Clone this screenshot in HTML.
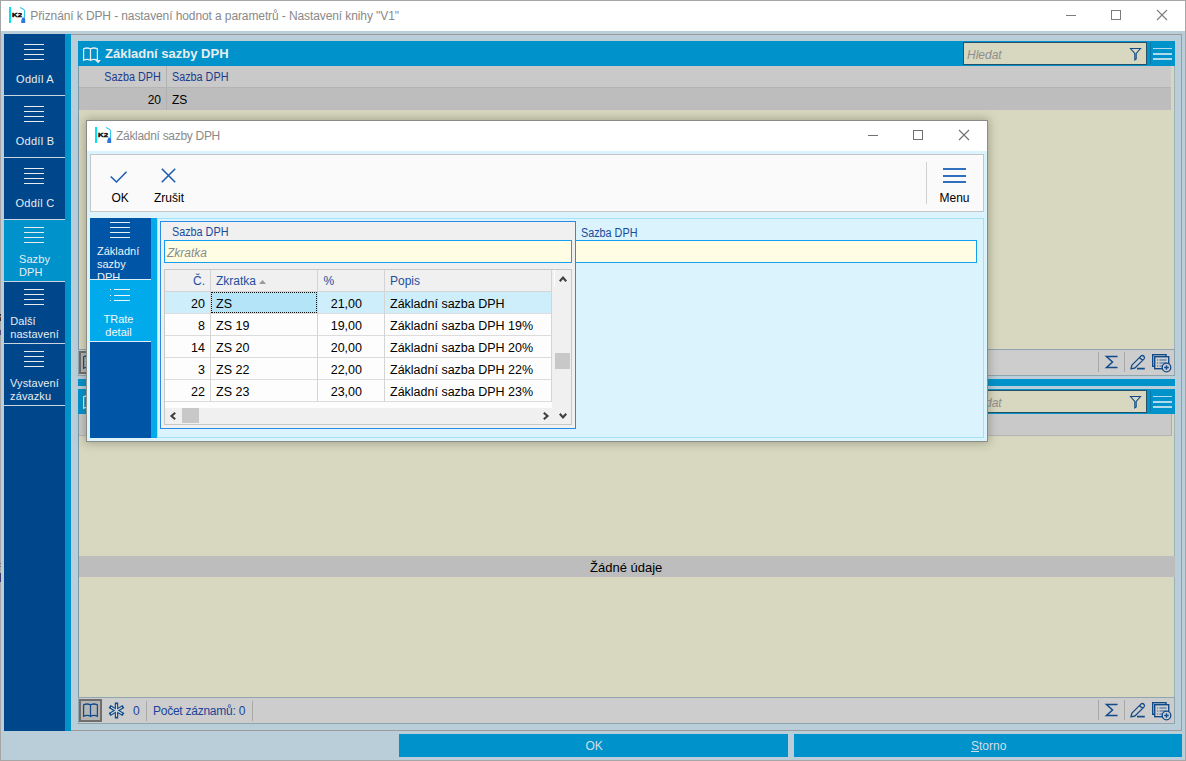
<!DOCTYPE html>
<html><head><meta charset="utf-8">
<style>
*{margin:0;padding:0;box-sizing:border-box}
html,body{width:1186px;height:761px;overflow:hidden}
body{position:relative;background:#b9ced9;font-family:"Liberation Sans",sans-serif;font-size:12px;color:#000}
.a{position:absolute}
.t{position:absolute;white-space:nowrap}
svg{overflow:visible}
</style></head><body>
<div class="a" style="left:0px;top:0px;width:1186px;height:761px;border:1px solid #a6a6a6"></div>
<div class="a" style="left:1px;top:1px;width:1184px;height:30px;background:#fff"></div>
<svg class="a" style="left:9px;top:7px" width="17" height="17" viewBox="0 0 17 17"><rect x="0" y="0" width="2" height="16" fill="#00e4f2"/><text x="3" y="10.2" font-family="Liberation Sans" font-weight="bold" font-size="6.2" textLength="10" lengthAdjust="spacingAndGlyphs" fill="#000" stroke="#000" stroke-width="0.35">K2</text><path d="M11 0.5 L14.5 2.2 Q15.6 3 15.6 4.5 L15.4 11" stroke="#38c6e6" stroke-width="1.1" fill="none"/><path d="M13.5 10.5 Q16.2 10 16.2 12.5 L16.2 16 L12.2 16 Q12 12.5 13.5 10.5Z" fill="#2a78dc"/></svg>
<div class="t" style="left:30.3px;top:8.84px;font-size:12px;line-height:14px;color:#898989;letter-spacing:-0.1px">Přiznání k DPH - nastavení hodnot a parametrů - Nastavení knihy "V1"</div>
<div class="a" style="left:1066px;top:15px;width:10px;height:1px;background:#7c7c7c"></div>
<div class="a" style="left:1111px;top:10px;width:10px;height:10px;border:1px solid #7c7c7c"></div>
<svg class="a" style="left:1157px;top:10px" width="10" height="10" viewBox="0 0 10 10"><path d="M0 0L10 10M10 0L0 10" stroke="#7c7c7c" stroke-width="1.1"/></svg>
<div class="a" style="left:0px;top:314px;width:1px;height:2px;background:#333"></div>
<div class="a" style="left:0px;top:317px;width:1px;height:2px;background:#6a3030"></div>
<div class="a" style="left:0px;top:319px;width:1px;height:2px;background:#333"></div>
<div class="a" style="left:0px;top:330px;width:1px;height:5px;background:#5a4a80"></div>
<div class="a" style="left:0px;top:573px;width:1px;height:9px;background:#3a3a72"></div>
<div class="a" style="left:0px;top:563px;width:1px;height:1px;background:#777"></div>
<div class="a" style="left:0px;top:566px;width:1px;height:1px;background:#777"></div>
<div class="a" style="left:71px;top:34px;width:1111px;height:697px;border:1px solid #9b9b9b;border-left:none"></div>
<div class="a" style="left:4px;top:34px;width:61px;height:697px;background:#00468a"></div>
<div class="a" style="left:65px;top:34px;width:6px;height:697px;background:#0092cb"></div>
<div class="a" style="left:4px;top:95px;width:61px;height:1px;background:#c9d5df"></div>
<div class="a" style="left:24px;top:44px;width:20px;height:1px;background:#e6ecef"></div>
<div class="a" style="left:24px;top:49px;width:20px;height:1px;background:#e6ecef"></div>
<div class="a" style="left:24px;top:54px;width:20px;height:1px;background:#e6ecef"></div>
<div class="a" style="left:24px;top:59px;width:20px;height:1px;background:#e6ecef"></div>
<div class="t" style="left:-165px;width:400px;top:72.99px;font-size:11px;line-height:13px;color:#e8eef2;text-align:center;letter-spacing:0.25px">Oddíl A</div>
<div class="a" style="left:4px;top:157px;width:61px;height:1px;background:#c9d5df"></div>
<div class="a" style="left:24px;top:106px;width:20px;height:1px;background:#e6ecef"></div>
<div class="a" style="left:24px;top:111px;width:20px;height:1px;background:#e6ecef"></div>
<div class="a" style="left:24px;top:116px;width:20px;height:1px;background:#e6ecef"></div>
<div class="a" style="left:24px;top:121px;width:20px;height:1px;background:#e6ecef"></div>
<div class="t" style="left:-165px;width:400px;top:134.99px;font-size:11px;line-height:13px;color:#e8eef2;text-align:center;letter-spacing:0.25px">Oddíl B</div>
<div class="a" style="left:4px;top:219px;width:61px;height:1px;background:#c9d5df"></div>
<div class="a" style="left:24px;top:168px;width:20px;height:1px;background:#e6ecef"></div>
<div class="a" style="left:24px;top:173px;width:20px;height:1px;background:#e6ecef"></div>
<div class="a" style="left:24px;top:178px;width:20px;height:1px;background:#e6ecef"></div>
<div class="a" style="left:24px;top:183px;width:20px;height:1px;background:#e6ecef"></div>
<div class="t" style="left:-165px;width:400px;top:196.99px;font-size:11px;line-height:13px;color:#e8eef2;text-align:center;letter-spacing:0.25px">Oddíl C</div>
<div class="a" style="left:4px;top:220px;width:67px;height:61px;background:#0092cb"></div>
<div class="a" style="left:4px;top:281px;width:61px;height:1px;background:#c9d5df"></div>
<div class="a" style="left:24px;top:227px;width:20px;height:1px;background:#e6ecef"></div>
<div class="a" style="left:24px;top:232px;width:20px;height:1px;background:#e6ecef"></div>
<div class="a" style="left:24px;top:237px;width:20px;height:1px;background:#e6ecef"></div>
<div class="a" style="left:24px;top:242px;width:20px;height:1px;background:#e6ecef"></div>
<div class="t" style="left:4px;width:61px;top:253.1px;font-size:11px;line-height:13px;color:#e8eef2;display:flex;justify-content:center;letter-spacing:0.1px"><div style="text-align:left">Sazby<br>DPH</div></div>
<div class="a" style="left:4px;top:343px;width:61px;height:1px;background:#c9d5df"></div>
<div class="a" style="left:24px;top:289px;width:20px;height:1px;background:#e6ecef"></div>
<div class="a" style="left:24px;top:294px;width:20px;height:1px;background:#e6ecef"></div>
<div class="a" style="left:24px;top:299px;width:20px;height:1px;background:#e6ecef"></div>
<div class="a" style="left:24px;top:304px;width:20px;height:1px;background:#e6ecef"></div>
<div class="t" style="left:4px;width:61px;top:315.1px;font-size:11px;line-height:13px;color:#e8eef2;display:flex;justify-content:center;letter-spacing:0.1px"><div style="text-align:left">Další<br>nastavení</div></div>
<div class="a" style="left:4px;top:405px;width:61px;height:1px;background:#c9d5df"></div>
<div class="a" style="left:24px;top:351px;width:20px;height:1px;background:#e6ecef"></div>
<div class="a" style="left:24px;top:356px;width:20px;height:1px;background:#e6ecef"></div>
<div class="a" style="left:24px;top:361px;width:20px;height:1px;background:#e6ecef"></div>
<div class="a" style="left:24px;top:366px;width:20px;height:1px;background:#e6ecef"></div>
<div class="t" style="left:4px;width:61px;top:377.1px;font-size:11px;line-height:13px;color:#e8eef2;display:flex;justify-content:center;letter-spacing:0.1px"><div style="text-align:left">Vystavení<br>závazku</div></div>
<div class="a" style="left:78px;top:41px;width:1097px;height:25px;background:#0092cb"></div>
<svg class="a" style="left:83px;top:47px" width="16" height="15" viewBox="0 0 16 15"><path d="M0.6 1.8 Q4 0.2 7.5 1.8 L7.5 13.2 Q4 11.6 0.6 13.2 Z M7.5 1.8 Q11 0.2 14.4 1.8 L14.4 13.2 Q11 11.6 7.5 13.2 Z" stroke="#e8ecee" stroke-width="1.25" fill="none"/></svg>
<svg class="a" style="left:94.5px;top:60px" width="6" height="4" viewBox="0 0 6 4"><path d="M0 0L6 0L3 3.2Z" fill="#e8ecee"/></svg>
<div class="t" style="left:105px;top:46.00px;font-size:13px;line-height:16px;color:#e9eef0;font-weight:bold">Základní sazby DPH</div>
<div class="a" style="left:963px;top:42px;width:184px;height:23px;background:#d8d8c0;border:1px solid #2a5068"></div>
<div class="t" style="left:967px;top:47.84px;font-size:12px;line-height:14px;color:#8e8e8e;font-style:italic">Hledat</div>
<svg class="a" style="left:1130px;top:48px" width="11" height="12" viewBox="0 0 11 12"><path d="M0.5 0.5 L10.5 0.5 L6.2 5.5 L6.2 11 L4.8 12 L4.8 5.5 Z" stroke="#124b8a" stroke-width="1.1" fill="none"/></svg>
<div class="a" style="left:1150px;top:43px;width:1px;height:21px;background:#0a78a8"></div>
<div class="a" style="left:1153px;top:47.8px;width:19px;height:1.6px;background:rgba(228,238,242,0.78)"></div>
<div class="a" style="left:1153px;top:53.0px;width:19px;height:1.6px;background:rgba(228,238,242,0.78)"></div>
<div class="a" style="left:1153px;top:58.199999999999996px;width:19px;height:1.6px;background:rgba(228,238,242,0.78)"></div>
<div class="a" style="left:78px;top:66px;width:1097px;height:283px;background:#d8d8c0;border-left:1px solid #7b98a6;border-right:1px solid #9fb2ba"></div>
<div class="a" style="left:79px;top:66px;width:1092px;height:21px;background:#c9c9c9"></div>
<div class="a" style="left:79px;top:87px;width:1092px;height:23px;background:#bdbdbd"></div>
<div class="a" style="left:79px;top:87px;width:1092px;height:1px;background:#b4b4b4"></div>
<div class="a" style="left:166px;top:66px;width:1px;height:44px;background:#b0b0b0"></div>
<div class="t" style="right:1025px;top:69.64px;font-size:12px;line-height:14px;color:#1b3c8c;text-align:right;transform:scaleX(0.9);transform-origin:right">Sazba DPH</div>
<div class="t" style="left:172px;top:69.64px;font-size:12px;line-height:14px;color:#1b3c8c;transform:scaleX(0.9);transform-origin:left">Sazba DPH</div>
<div class="t" style="right:1025px;top:92.84px;font-size:12px;line-height:14px;color:#000;text-align:right;">20</div>
<div class="t" style="left:172px;top:92.84px;font-size:12px;line-height:14px;color:#000;">ZS</div>
<div class="a" style="left:78px;top:349px;width:1097px;height:27px;background:#cdcdcd;border:1px solid #8ea4ae"></div>
<div class="a" style="left:79px;top:351px;width:23px;height:23px;background:#b5b5b5;border:2px solid #6e6e6e"></div>
<svg class="a" style="left:83px;top:355px" width="16" height="15" viewBox="0 0 16 15"><path d="M0.6 1.8 Q4 0.2 7.5 1.8 L7.5 13.2 Q4 11.6 0.6 13.2 Z M7.5 1.8 Q11 0.2 14.4 1.8 L14.4 13.2 Q11 11.6 7.5 13.2 Z" stroke="#124b8a" stroke-width="1.25" fill="none"/></svg>
<div class="a" style="left:1098px;top:352px;width:1px;height:20px;background:#a8a8a8"></div>
<div class="a" style="left:1124px;top:352px;width:1px;height:20px;background:#a8a8a8"></div>
<svg class="a" style="left:1105px;top:355px" width="14" height="14" viewBox="0 0 14 14"><path d="M12.5 1.5 L1.5 1.5 L7.5 7 L1.5 12.5 L12.5 12.5" stroke="#124b8a" stroke-width="1.5" fill="none" stroke-linejoin="miter"/></svg>
<svg class="a" style="left:1130px;top:355px" width="16" height="16" viewBox="0 0 16 16"><path d="M0.9 13.8 L1.9 10.1 L10.9 1.1 Q12.5 -0.2 13.9 1.2 Q15.2 2.6 13.9 4.1 L4.9 13 Z M9.6 2.5 L12.6 5.5" stroke="#124b8a" stroke-width="1.3" fill="none" stroke-linejoin="round"/><path d="M7 13.6 L14.8 13.6" stroke="#124b8a" stroke-width="1.7"/></svg>
<svg class="a" style="left:1152px;top:354px" width="21" height="19" viewBox="0 0 21 19"><rect x="0.7" y="0.7" width="13.3" height="11.6" fill="none" stroke="#124b8a" stroke-width="1.4"/><rect x="2.7" y="2.7" width="14" height="12" fill="#cdcdcd" stroke="#124b8a" stroke-width="1.4"/><path d="M5 6h1.2M7.5 6h7M5 9h1.2M7.5 9h7M5 12h1.2M7.5 12h4" stroke="#3a6aa8" stroke-width="1.1"/><circle cx="14.5" cy="13.5" r="4.3" fill="#cdcdcd" stroke="#124b8a" stroke-width="1.3"/><path d="M12.2 13.5h4.6M14.5 11.2v4.6" stroke="#124b8a" stroke-width="1.4"/></svg>
<div class="a" style="left:78px;top:379px;width:1097px;height:7px;background:#0092cb"></div>
<div class="a" style="left:78px;top:389px;width:1097px;height:25px;background:#0092cb"></div>
<svg class="a" style="left:83px;top:395px" width="16" height="15" viewBox="0 0 16 15"><path d="M0.6 1.8 Q4 0.2 7.5 1.8 L7.5 13.2 Q4 11.6 0.6 13.2 Z M7.5 1.8 Q11 0.2 14.4 1.8 L14.4 13.2 Q11 11.6 7.5 13.2 Z" stroke="#e8ecee" stroke-width="1.25" fill="none"/></svg>
<svg class="a" style="left:94.5px;top:408px" width="6" height="4" viewBox="0 0 6 4"><path d="M0 0L6 0L3 3.2Z" fill="#e8ecee"/></svg>
<div class="a" style="left:963px;top:390px;width:184px;height:23px;background:#d8d8c0;border:1px solid #2a5068"></div>
<div class="t" style="left:967px;top:395.84px;font-size:12px;line-height:14px;color:#8e8e8e;font-style:italic">Hledat</div>
<svg class="a" style="left:1130px;top:396px" width="11" height="12" viewBox="0 0 11 12"><path d="M0.5 0.5 L10.5 0.5 L6.2 5.5 L6.2 11 L4.8 12 L4.8 5.5 Z" stroke="#124b8a" stroke-width="1.1" fill="none"/></svg>
<div class="a" style="left:1150px;top:391px;width:1px;height:21px;background:#0a78a8"></div>
<div class="a" style="left:1153px;top:395.8px;width:19px;height:1.6px;background:rgba(228,238,242,0.78)"></div>
<div class="a" style="left:1153px;top:401.0px;width:19px;height:1.6px;background:rgba(228,238,242,0.78)"></div>
<div class="a" style="left:1153px;top:406.2px;width:19px;height:1.6px;background:rgba(228,238,242,0.78)"></div>
<div class="a" style="left:78px;top:414px;width:1097px;height:283px;background:#d8d8c0;border-left:1px solid #7b98a6;border-right:1px solid #9fb2ba"></div>
<div class="a" style="left:79px;top:414px;width:1093px;height:22px;background:#c9c9c9;border-right:1px solid #acacac;border-bottom:1px solid #b4b4b4"></div>
<div class="a" style="left:79px;top:556px;width:1096px;height:21px;background:#bdbdbd"></div>
<div class="t" style="left:590px;top:559.50px;font-size:13px;line-height:16px;color:#000;">Žádné údaje</div>
<div class="a" style="left:78px;top:697px;width:1097px;height:27px;background:#cdcdcd;border:1px solid #8ea4ae"></div>
<div class="a" style="left:79px;top:699px;width:23px;height:23px;background:#b5b5b5;border:2px solid #6e6e6e"></div>
<svg class="a" style="left:83px;top:703px" width="16" height="15" viewBox="0 0 16 15"><path d="M0.6 1.8 Q4 0.2 7.5 1.8 L7.5 13.2 Q4 11.6 0.6 13.2 Z M7.5 1.8 Q11 0.2 14.4 1.8 L14.4 13.2 Q11 11.6 7.5 13.2 Z" stroke="#124b8a" stroke-width="1.25" fill="none"/></svg>
<div class="a" style="left:1098px;top:700px;width:1px;height:20px;background:#a8a8a8"></div>
<div class="a" style="left:1124px;top:700px;width:1px;height:20px;background:#a8a8a8"></div>
<svg class="a" style="left:1105px;top:703px" width="14" height="14" viewBox="0 0 14 14"><path d="M12.5 1.5 L1.5 1.5 L7.5 7 L1.5 12.5 L12.5 12.5" stroke="#124b8a" stroke-width="1.5" fill="none" stroke-linejoin="miter"/></svg>
<svg class="a" style="left:1130px;top:703px" width="16" height="16" viewBox="0 0 16 16"><path d="M0.9 13.8 L1.9 10.1 L10.9 1.1 Q12.5 -0.2 13.9 1.2 Q15.2 2.6 13.9 4.1 L4.9 13 Z M9.6 2.5 L12.6 5.5" stroke="#124b8a" stroke-width="1.3" fill="none" stroke-linejoin="round"/><path d="M7 13.6 L14.8 13.6" stroke="#124b8a" stroke-width="1.7"/></svg>
<svg class="a" style="left:1152px;top:702px" width="21" height="19" viewBox="0 0 21 19"><rect x="0.7" y="0.7" width="13.3" height="11.6" fill="none" stroke="#124b8a" stroke-width="1.4"/><rect x="2.7" y="2.7" width="14" height="12" fill="#cdcdcd" stroke="#124b8a" stroke-width="1.4"/><path d="M5 6h1.2M7.5 6h7M5 9h1.2M7.5 9h7M5 12h1.2M7.5 12h4" stroke="#3a6aa8" stroke-width="1.1"/><circle cx="14.5" cy="13.5" r="4.3" fill="#cdcdcd" stroke="#124b8a" stroke-width="1.3"/><path d="M12.2 13.5h4.6M14.5 11.2v4.6" stroke="#124b8a" stroke-width="1.4"/></svg>
<svg class="a" style="left:109px;top:703px" width="16" height="15" viewBox="0 0 16 15"><g fill="none" stroke-linecap="square"><path d="M7.5 1.2V13.8M2 4.3L13 10.7M2 10.7L13 4.3" stroke="#124b8a" stroke-width="3.4"/><path d="M7.5 1.2V13.8M2 4.3L13 10.7M2 10.7L13 4.3" stroke="#d6dde2" stroke-width="1.1" stroke-linecap="butt"/></g></svg>
<div class="t" style="left:133px;top:703.84px;font-size:12px;line-height:14px;color:#1a449a;">0</div>
<div class="a" style="left:146px;top:701px;width:1px;height:20px;background:#a8a8a8"></div>
<div class="t" style="left:153px;top:703.84px;font-size:12px;line-height:14px;color:#1a449a;letter-spacing:-0.25px">Počet záznamů: 0</div>
<div class="a" style="left:252px;top:701px;width:1px;height:20px;background:#a8a8a8"></div>
<div class="a" style="left:399px;top:734px;width:389px;height:23px;background:#0092cb"></div>
<div class="t" style="left:585.5px;top:738.64px;font-size:12px;line-height:14px;color:#d2dfe8;">OK</div>
<div class="a" style="left:794px;top:734px;width:388px;height:23px;background:#0092cb"></div>
<div class="t" style="left:971px;top:738.64px;font-size:12px;line-height:14px;color:#d2dfe8;"><u>S</u>torno</div>
<div class="a" style="left:86px;top:120px;width:902px;height:322px;background:#dbf3fd;border:1px solid #8b8b85;box-shadow:0 0 9px 1px rgba(60,60,40,0.35)"></div>
<div class="a" style="left:87px;top:121px;width:900px;height:30px;background:#fff"></div>
<svg class="a" style="left:95px;top:127px" width="17" height="17" viewBox="0 0 17 17"><rect x="0" y="0" width="2" height="16" fill="#00e4f2"/><text x="3" y="10.2" font-family="Liberation Sans" font-weight="bold" font-size="6.2" textLength="10" lengthAdjust="spacingAndGlyphs" fill="#000" stroke="#000" stroke-width="0.35">K2</text><path d="M11 0.5 L14.5 2.2 Q15.6 3 15.6 4.5 L15.4 11" stroke="#38c6e6" stroke-width="1.1" fill="none"/><path d="M13.5 10.5 Q16.2 10 16.2 12.5 L16.2 16 L12.2 16 Q12 12.5 13.5 10.5Z" fill="#2a78dc"/></svg>
<div class="t" style="left:116px;top:128.84px;font-size:12px;line-height:14px;color:#8a8a8a;letter-spacing:-0.3px">Základní sazby DPH</div>
<div class="a" style="left:868px;top:135px;width:10px;height:1px;background:#707070"></div>
<div class="a" style="left:913px;top:130px;width:10px;height:10px;border:1px solid #707070"></div>
<svg class="a" style="left:959px;top:130px" width="10" height="10" viewBox="0 0 10 10"><path d="M0 0L10 10M10 0L0 10" stroke="#707070" stroke-width="1.1"/></svg>
<div class="a" style="left:90px;top:154px;width:894px;height:58px;background:#fafafa;border:1px solid #c6c6c6"></div>
<svg class="a" style="left:110px;top:171px" width="17" height="12" viewBox="0 0 17 12"><path d="M0.7 5.5 L6.5 11 L16.5 0.8" stroke="#1d5db0" stroke-width="1.6" fill="none"/></svg>
<svg class="a" style="left:161px;top:168px" width="15" height="15" viewBox="0 0 15 15"><path d="M0.8 0.8L14.2 14.2M14.2 0.8L0.8 14.2" stroke="#1d5db0" stroke-width="1.6" fill="none"/></svg>
<div class="t" style="left:111.5px;top:190.84px;font-size:12px;line-height:14px;color:#000;">OK</div>
<div class="t" style="left:154px;top:190.84px;font-size:12px;line-height:14px;color:#000;">Zrušit</div>
<div class="a" style="left:926px;top:162px;width:1px;height:42px;background:#d0d0d0"></div>
<div class="a" style="left:943px;top:168.0px;width:23px;height:2px;background:#2f6fbe"></div>
<div class="a" style="left:943px;top:174.6px;width:23px;height:2px;background:#2f6fbe"></div>
<div class="a" style="left:943px;top:181.2px;width:23px;height:2px;background:#2f6fbe"></div>
<div class="t" style="left:939.5px;top:190.54px;font-size:12px;line-height:14px;color:#000;">Menu</div>
<div class="a" style="left:157px;top:218px;width:827px;height:220px;border:1px solid #a3e1f9"></div>
<div class="a" style="left:90px;top:218px;width:61px;height:220px;background:#0055a6"></div>
<div class="a" style="left:151px;top:218px;width:6px;height:220px;background:#00aaeb"></div>
<div class="a" style="left:90px;top:279px;width:61px;height:1px;background:#d8eef8"></div>
<div class="a" style="left:110px;top:222px;width:20px;height:1px;background:#e8f0f4"></div>
<div class="a" style="left:110px;top:227px;width:20px;height:1px;background:#e8f0f4"></div>
<div class="a" style="left:110px;top:232px;width:20px;height:1px;background:#e8f0f4"></div>
<div class="a" style="left:110px;top:237px;width:20px;height:1px;background:#e8f0f4"></div>
<div class="a" style="left:90px;top:218px;width:61px;height:61px;overflow:hidden"><div class="t" style="left:7px;top:26.6px;font-size:11px;line-height:13px;color:#eef3f6">Základní<br>sazby<br>DPH</div></div>
<div class="a" style="left:90px;top:280px;width:67px;height:61px;background:#00aaeb"></div>
<div class="a" style="left:90px;top:341px;width:61px;height:1px;background:#d8eef8"></div>
<div class="a" style="left:110px;top:289.0px;width:1px;height:1px;background:#eef6fa"></div>
<div class="a" style="left:114px;top:289.0px;width:16px;height:1px;background:#eef6fa"></div>
<div class="a" style="left:110px;top:294.5px;width:1px;height:1px;background:#eef6fa"></div>
<div class="a" style="left:114px;top:294.5px;width:16px;height:1px;background:#eef6fa"></div>
<div class="a" style="left:110px;top:300.0px;width:1px;height:1px;background:#eef6fa"></div>
<div class="a" style="left:114px;top:300.0px;width:16px;height:1px;background:#eef6fa"></div>
<div class="t" style="left:88px;width:61px;top:313.1px;font-size:11px;line-height:13px;color:#f4f8fa;text-align:center">TRate<br>detail</div>
<div class="a" style="left:160px;top:221px;width:416px;height:208px;background:#f0f0f0;border:1px solid #2a8be6"></div>
<div class="t" style="left:171.5px;top:225.14px;font-size:12px;line-height:14px;color:#174a9c;transform:scaleX(0.9);transform-origin:left">Sazba DPH</div>
<div class="a" style="left:164px;top:240px;width:408px;height:23px;background:#fffde4;border:1px solid #14a0f2"></div>
<div class="t" style="left:167px;top:245.54px;font-size:12px;line-height:14px;color:#8a8a8a;font-style:italic">Zkratka</div>
<div class="t" style="left:581px;top:225.84px;font-size:12px;line-height:14px;color:#174a9c;transform:scaleX(0.9);transform-origin:left">Sazba DPH</div>
<div class="a" style="left:576px;top:240px;width:401px;height:23px;background:#fffde4;border:1px solid #14a0f2;border-left:none"></div>
<div class="a" style="left:164px;top:269px;width:408px;height:156px;background:#fdfdfd;border:1px solid #c8c8c8"></div>
<div class="a" style="left:165px;top:270px;width:387px;height:21px;background:#f0f0f0"></div>
<div class="a" style="left:165px;top:291px;width:387px;height:1px;background:#d4d4d4"></div>
<div class="a" style="left:165px;top:292px;width:387px;height:21px;background:#cdeefa"></div>
<div class="a" style="left:165px;top:313px;width:387px;height:1px;background:#dcdcdc"></div>
<div class="a" style="left:165px;top:335px;width:387px;height:1px;background:#dcdcdc"></div>
<div class="a" style="left:165px;top:357px;width:387px;height:1px;background:#dcdcdc"></div>
<div class="a" style="left:165px;top:379px;width:387px;height:1px;background:#dcdcdc"></div>
<div class="a" style="left:165px;top:401px;width:387px;height:1px;background:#dcdcdc"></div>
<div class="a" style="left:210px;top:270px;width:1px;height:132px;background:#d4d4d4"></div>
<div class="a" style="left:317px;top:270px;width:1px;height:132px;background:#d4d4d4"></div>
<div class="a" style="left:384px;top:270px;width:1px;height:132px;background:#d4d4d4"></div>
<div class="a" style="left:551px;top:270px;width:1px;height:132px;background:#d4d4d4"></div>
<div class="a" style="left:211px;top:292px;width:106px;height:21px;background:#b3e4f8;outline:1px dotted #000;outline-offset:-1px"></div>
<div class="a" style="left:211px;top:292px;width:106px;height:21px;border:1px dotted #111"></div>
<div class="t" style="right:981px;top:273.64px;font-size:12px;line-height:14px;color:#1d4f9f;text-align:right;">Č.</div>
<div class="t" style="left:216px;top:273.64px;font-size:12px;line-height:14px;color:#1d4f9f;">Zkratka</div>
<svg class="a" style="left:259px;top:280px" width="7" height="4" viewBox="0 0 7 4"><path d="M0 4L3.5 0L7 4Z" fill="#9a9a9a"/></svg>
<div class="t" style="left:323.5px;top:273.64px;font-size:12px;line-height:14px;color:#1d4f9f;">%</div>
<div class="t" style="left:390px;top:273.64px;font-size:12px;line-height:14px;color:#1d4f9f;">Popis</div>
<div class="t" style="right:981px;top:296.57px;font-size:12.5px;line-height:15px;color:#000;text-align:right;">20</div>
<div class="t" style="left:216px;top:296.57px;font-size:12.5px;line-height:15px;color:#000;">ZS</div>
<div class="t" style="right:824px;top:296.57px;font-size:12.5px;line-height:15px;color:#000;text-align:right;">21,00</div>
<div class="t" style="left:390px;top:296.57px;font-size:12.5px;line-height:15px;color:#000;">Základní sazba DPH</div>
<div class="t" style="right:981px;top:318.57px;font-size:12.5px;line-height:15px;color:#000;text-align:right;">8</div>
<div class="t" style="left:216px;top:318.57px;font-size:12.5px;line-height:15px;color:#000;">ZS 19</div>
<div class="t" style="right:824px;top:318.57px;font-size:12.5px;line-height:15px;color:#000;text-align:right;">19,00</div>
<div class="t" style="left:390px;top:318.57px;font-size:12.5px;line-height:15px;color:#000;">Základní sazba DPH 19%</div>
<div class="t" style="right:981px;top:340.57px;font-size:12.5px;line-height:15px;color:#000;text-align:right;">14</div>
<div class="t" style="left:216px;top:340.57px;font-size:12.5px;line-height:15px;color:#000;">ZS 20</div>
<div class="t" style="right:824px;top:340.57px;font-size:12.5px;line-height:15px;color:#000;text-align:right;">20,00</div>
<div class="t" style="left:390px;top:340.57px;font-size:12.5px;line-height:15px;color:#000;">Základní sazba DPH 20%</div>
<div class="t" style="right:981px;top:362.57px;font-size:12.5px;line-height:15px;color:#000;text-align:right;">3</div>
<div class="t" style="left:216px;top:362.57px;font-size:12.5px;line-height:15px;color:#000;">ZS 22</div>
<div class="t" style="right:824px;top:362.57px;font-size:12.5px;line-height:15px;color:#000;text-align:right;">22,00</div>
<div class="t" style="left:390px;top:362.57px;font-size:12.5px;line-height:15px;color:#000;">Základní sazba DPH 22%</div>
<div class="t" style="right:981px;top:384.57px;font-size:12.5px;line-height:15px;color:#000;text-align:right;">22</div>
<div class="t" style="left:216px;top:384.57px;font-size:12.5px;line-height:15px;color:#000;">ZS 23</div>
<div class="t" style="right:824px;top:384.57px;font-size:12.5px;line-height:15px;color:#000;text-align:right;">23,00</div>
<div class="t" style="left:390px;top:384.57px;font-size:12.5px;line-height:15px;color:#000;">Základní sazba DPH 23%</div>
<div class="a" style="left:552px;top:270px;width:19px;height:154px;background:#f0f0f0"></div>
<div class="a" style="left:554px;top:270px;width:1px;height:17px;background:#fff"></div>
<svg class="a" style="left:559px;top:276px" width="8" height="6" viewBox="0 0 8 6"><path d="M0.8 5.2L4 1.5L7.2 5.2" stroke="#3e3e3e" stroke-width="2.1" fill="none"/></svg>
<div class="a" style="left:555px;top:353px;width:15px;height:16px;background:#c8c8c8"></div>
<svg class="a" style="left:559px;top:413px" width="8" height="6" viewBox="0 0 8 6"><path d="M0.8 0.8L4 4.5L7.2 0.8" stroke="#3e3e3e" stroke-width="2.1" fill="none"/></svg>
<div class="a" style="left:165px;top:408px;width:389px;height:16px;background:#f0f0f0"></div>
<svg class="a" style="left:170px;top:412px" width="6" height="8" viewBox="0 0 6 8"><path d="M5.2 0.8L1.5 4L5.2 7.2" stroke="#3e3e3e" stroke-width="2.1" fill="none"/></svg>
<div class="a" style="left:182px;top:408px;width:17px;height:15px;background:#c8c8c8"></div>
<svg class="a" style="left:543px;top:412px" width="6" height="8" viewBox="0 0 6 8"><path d="M0.8 0.8L4.5 4L0.8 7.2" stroke="#3e3e3e" stroke-width="2.1" fill="none"/></svg>
</body></html>
